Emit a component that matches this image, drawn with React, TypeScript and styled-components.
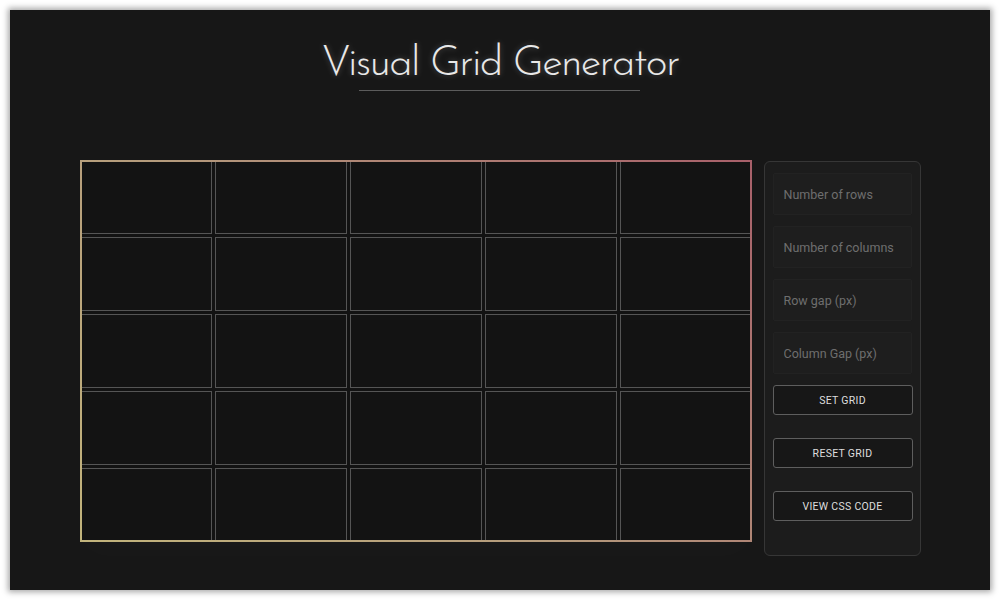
import React from "react";
import styled, { createGlobalStyle } from "styled-components";

const Global = createGlobalStyle`
  html, body { margin: 0; padding: 0; background: #ffffff; }
  body { width: 1000px; height: 600px; overflow: hidden; font-family: Roboto, "Liberation Sans", sans-serif; }
  * { box-sizing: border-box; }
`;

const Frame = styled.div`
  margin: 10px;
  width: 980px;
  height: 580px;
  background: #171717;
  box-shadow: 0 0 6px 2px rgba(0, 0, 0, 0.35);
  display: flex;
  flex-direction: column;
  align-items: center;
`;

const Header = styled.header`
  display: flex;
  flex-direction: column;
  align-items: center;
  padding-top: 30px;
`;

const Title = styled.h1`
  margin: 0;
  font-family: "Josefin Sans", Lato, "Open Sans", sans-serif;
  font-weight: 300;
  font-size: 42px;
  line-height: 50px;
  color: #e8e8e8;
  letter-spacing: -1.7px;
  text-shadow: 0 0 6px rgba(255, 255, 255, 0.25);
`;

const Rule = styled.div`
  width: 281px;
  height: 1px;
  background: #5c5c5c;
`;

const Main = styled.main`
  display: flex;
  align-items: flex-start;
  gap: 12px;
  margin-top: 69px;
`;

const GridBox = styled.div`
  position: relative;
  width: 672px;
  height: 382px;
  background: #121212;
  display: grid;
  grid-template-columns: repeat(5, 1fr);
  grid-template-rows: repeat(5, 1fr);
  gap: 3px;
  box-shadow: 0 14px 30px rgba(255, 255, 255, 0.015);
  &::after {
    content: "";
    position: absolute;
    inset: 0;
    border: 2px solid transparent;
    border-image: linear-gradient(45deg, #c2b47c 0%, #b49a7c 45%, #a8606a 100%) 1;
    pointer-events: none;
  }
`;

const Cell = styled.div`
  border: 1px solid #555555;
  background: #131313;
`;

const Panel = styled.aside`
  width: 157px;
  height: 395px;
  margin-top: 1px;
  background: #1c1c1c;
  border: 1px solid #363636;
  border-radius: 6px;
  padding: 11px 8px;
  display: flex;
  flex-direction: column;
  gap: 11px;
`;

const Field = styled.input`
  width: 139px;
  height: 42px;
  background: #1e1e1e;
  border: 1px solid #222222;
  border-radius: 2px;
  padding: 0 10px;
  font-family: Roboto, "Liberation Sans", sans-serif;
  font-size: 12.5px;
  color: #ccc;
  outline: none;
  &::placeholder { color: #6e6e6e; }
`;

const Button = styled.button`
  width: 140px;
  height: 30px;
  margin-bottom: 12px;
  background: #171717;
  border: 1px solid #5e5e5e;
  border-radius: 3px;
  color: #dedede;
  font-family: Roboto, "Liberation Sans", sans-serif;
  font-size: 10.5px;
  letter-spacing: 0.3px;
  text-transform: uppercase;
  cursor: pointer;
`;

const fields = ["Number of rows", "Number of columns", "Row gap (px)", "Column Gap (px)"];
const buttons = ["Set Grid", "Reset Grid", "View CSS Code"];

export default function App() {
  return (
    <>
      <Global />
      <Frame>
        <Header>
          <Title>Visual Grid Generator</Title>
          <Rule />
        </Header>
        <Main>
          <GridBox>
            {Array.from({ length: 25 }).map((_, i) => (
              <Cell key={i} />
            ))}
          </GridBox>
          <Panel>
            {fields.map((f) => (
              <Field key={f} placeholder={f} />
            ))}
            {buttons.map((b) => (
              <Button key={b}>{b}</Button>
            ))}
          </Panel>
        </Main>
      </Frame>
    </>
  );
}
